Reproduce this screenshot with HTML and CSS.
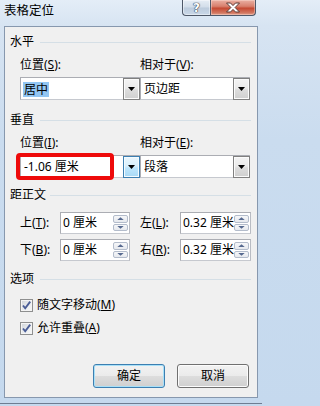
FILE: index.html
```html
<!DOCTYPE html>
<html lang="zh-CN">
<head>
<meta charset="utf-8">
<title>表格定位</title>
<link rel="stylesheet" href="styles.css">
</head>
<body>
<div class="titlebar">
  <div class="title">表格定位</div>
  <div class="caption-btns">
    <div class="cap help">?</div>
    <div class="cap close">
      <svg width="16" height="11" viewBox="0 0 16 11"><path d="M1.5 1h4l2.5 2.6L10.5 1h4l-4.4 4.5 4.4 4.5h-4L8 7.4 5.5 10h-4l4.4-4.5z" fill="#fff" stroke="#5b3a35" stroke-width="1" stroke-linejoin="round"/></svg>
    </div>
  </div>
</div>
<div class="client">
  <div class="group-head first"><span>水平</span><i class="rule"></i></div>
  <div class="pair labels"><label>位置(<u>S</u>):</label><label>相对于(<u>V</u>):</label></div>
  <div class="pair combos">
    <div class="combo"><span class="val"><span class="sel">居中</span></span><span class="drop"></span></div>
    <div class="combo"><span class="val">页边距</span><span class="drop"></span></div>
  </div>

  <div class="group-head"><span>垂直</span><i class="rule"></i></div>
  <div class="pair labels"><label>位置(<u>I</u>):</label><label>相对于(<u>E</u>):</label></div>
  <div class="pair combos">
    <div class="combo focused"><span class="val">-1.06 厘米</span><span class="drop"></span><span class="annot"></span></div>
    <div class="combo"><span class="val">段落</span><span class="drop"></span></div>
  </div>

  <div class="group-head mid"><span>距正文</span><i class="rule"></i></div>
  <div class="spin-row">
    <label>上(<u>T</u>):</label>
    <div class="spin"><span class="val">0 厘米</span><span class="btns"><span class="up"></span><span class="down"></span></span></div>
    <label>左(<u>L</u>):</label>
    <div class="spin wide"><span class="val">0.32 厘米</span><span class="btns"><span class="up"></span><span class="down"></span></span></div>
  </div>
  <div class="spin-row second">
    <label>下(<u>B</u>):</label>
    <div class="spin"><span class="val">0 厘米</span><span class="btns"><span class="up"></span><span class="down"></span></span></div>
    <label>右(<u>R</u>):</label>
    <div class="spin wide"><span class="val">0.32 厘米</span><span class="btns"><span class="up"></span><span class="down"></span></span></div>
  </div>

  <div class="group-head opts"><span>选项</span><i class="rule"></i></div>
  <div class="check-row">
    <span class="checkbox"><svg width="11" height="11" viewBox="0 0 11 11"><path d="M2 5.5l2.2 2.8L9.2 1.6" fill="none" stroke="#4a5d96" stroke-width="1.9"/></svg></span>
    <span>随文字移动(<u>M</u>)</span>
  </div>
  <div class="check-row second">
    <span class="checkbox"><svg width="11" height="11" viewBox="0 0 11 11"><path d="M2 5.5l2.2 2.8L9.2 1.6" fill="none" stroke="#4a5d96" stroke-width="1.9"/></svg></span>
    <span>允许重叠(<u>A</u>)</span>
  </div>

  <div class="footer">
    <button class="btn default">确定</button>
    <button class="btn">取消</button>
  </div>
</div>
<div class="edge"></div>
</body>
</html>
```
FILE: styles.css
```css
* { box-sizing: border-box; }
html, body { margin: 0; padding: 0; }
body {
  width: 262px;
  height: 406px;
  overflow: hidden;
  background: linear-gradient(180deg, #e4edf7 0px, #d7e4f2 26px, #cadcef 140px, #c5d9ee 406px);
  font-family: "Noto Sans", "Noto Sans CJK SC", sans-serif;
  font-size: 12px;
  line-height: 16px;
  color: #000;
}
u { text-decoration: underline; text-underline-offset: 1px; }

.titlebar {
  height: 26px;
  display: flex;
  justify-content: space-between;
  align-items: flex-start;
}
.title {
  padding: 3px 0 0 4px;
  font-size: 12.5px;
  line-height: 16px;
  color: #000;
}
.caption-btns { display: flex; margin-right: 6px; }
.cap {
  height: 16px;
  border: 1px solid #4e5868;
  border-top: none;
  display: flex;
  align-items: center;
  justify-content: center;
}
.help {
  width: 28px;
  border-right: none;
  border-radius: 0 0 0 4px;
  background: linear-gradient(180deg, #e6edf5 0%, #d2dde9 48%, #bccbdc 52%, #cad8e8 100%);
  box-shadow: inset 0 0 0 1px rgba(255,255,255,0.45);
  color: #fff;
  font-family: "DejaVu Sans", sans-serif;
  font-weight: bold;
  font-size: 12px;
  line-height: 14px;
  text-shadow: 0 0 1px #2e3a4c, 0 0 1px #2e3a4c, 0 0 1px #2e3a4c;
}
.close {
  width: 46px;
  border-radius: 0 0 4px 0;
  background: linear-gradient(180deg, #eab0a3 0%, #d8806d 42%, #c54a33 55%, #d2765f 85%, #e0a08c 100%);
  box-shadow: inset 0 0 0 1px rgba(255,230,220,0.4);
}

.client {
  margin: 0 4px;
  height: 372px;
  border: 1px solid #8798ae;
  background: #f0f0f0;
  padding: 0 6px 0 5px;
  display: flex;
  flex-direction: column;
}

.group-head {
  display: flex;
  align-items: center;
  gap: 6px;
  margin-top: 12px;
}
.group-head.first { margin-top: 7px; }
.group-head.mid { margin-top: 9px; gap: 4px; }
.group-head.opts { margin-top: 10px; }
.rule {
  flex: 1;
  height: 1px;
  background: #d5dfe6;
}

.pair {
  display: grid;
  grid-template-columns: 120px 110px;
  margin-left: 10px;
}
.pair.labels { margin-top: 7px; }
.pair.combos { margin-top: 4px; }

.combo {
  position: relative;
  height: 23px;
  border: 1px solid #abadb3;
  border-right-color: #b9bcc3;
  border-bottom-color: #c6c9cf;
  background: #fff;
  display: flex;
}
.combo .val {
  flex: 1;
  display: flex;
  align-items: center;
  padding-left: 3px;
  white-space: nowrap;
}
.combo .sel {
  background: #92c6f3;
  line-height: 15px;
  margin-left: -1px;
  padding: 0 1px;
  margin-top: 2px;
}
.combo .drop {
  width: 17px;
  border: 1px solid #808080;
  margin: 0 -1px -1px 0;
  background: linear-gradient(180deg, #f3f3f3 0%, #ebebeb 45%, #dcdcdc 55%, #cfcfcf 100%);
  box-shadow: inset 0 0 0 1px #fbfbfb;
  display: flex;
  align-items: center;
  justify-content: center;
}
.combo .drop::after {
  content: "";
  width: 7px;
  height: 4px;
  background: #000;
  clip-path: polygon(0 0, 100% 0, 50% 100%);
}
.combo.focused .drop {
  border-color: #3c7fb1;
  background: linear-gradient(180deg, #eaf6fd 0%, #d9f0fc 45%, #bee6fd 55%, #a7d9f5 100%);
  box-shadow: inset 0 0 0 1px #f3fbff;
}
.annot {
  position: absolute;
  left: -5px;
  top: -3px;
  width: 98px;
  height: 27px;
  border: 4px solid #ee0a0a;
  border-radius: 4px;
}

.spin-row {
  display: grid;
  grid-template-columns: 40px 80px 40px 71px;
  align-items: center;
  margin-left: 10px;
  margin-top: 9px;
}
.spin-row.second { margin-top: 5px; }
.spin {
  width: 70px;
  height: 22px;
  border: 1px solid #abadb3;
  border-right-color: #b9bcc3;
  border-bottom-color: #c6c9cf;
  background: #fff;
  display: flex;
}
.spin.wide { width: 71px; }
.spin .val {
  flex: 1;
  overflow: hidden;
  white-space: nowrap;
  padding-left: 2px;
  line-height: 20px;
}
.spin .btns {
  width: 16px;
  display: flex;
  flex-direction: column;
  gap: 1px;
  padding: 2px 1px 2px 0;
}
.spin .up, .spin .down {
  flex: 1;
  border: 1px solid #b3bccb;
  border-radius: 2px;
  background: linear-gradient(180deg, #f6f7f9 0%, #e6e9ee 100%);
  display: flex;
  align-items: center;
  justify-content: center;
}
.spin .up::after, .spin .down::after {
  content: "";
  width: 7px;
  height: 3px;
  background: #56698f;
}
.spin .up::after { clip-path: polygon(50% 0, 100% 100%, 0 100%); }
.spin .down::after { clip-path: polygon(0 0, 100% 0, 50% 100%); }

.check-row {
  display: flex;
  align-items: center;
  gap: 4px;
  margin-left: 10px;
  margin-top: 10px;
}
.check-row.second { margin-top: 7px; }
.checkbox {
  width: 13px;
  height: 13px;
  border: 1px solid #8e8f8f;
  background: linear-gradient(135deg, #cfd3d8 0%, #eceef0 60%, #f8f8f8 100%);
  box-shadow: inset 0 0 0 1px #f4f4f4;
  display: flex;
  align-items: center;
  justify-content: center;
}

.footer {
  margin-top: auto;
  margin-bottom: 9px;
  margin-right: 2px;
  display: flex;
  justify-content: flex-end;
  gap: 12px;
}
.btn {
  width: 72px;
  height: 24px;
  padding: 0;
  border: 1px solid #707070;
  border-radius: 3px;
  background: linear-gradient(180deg, #f2f2f2 0%, #ebebeb 49%, #dddddd 51%, #cfcfcf 100%);
  box-shadow: inset 0 0 0 1px #fcfcfc;
  font-family: "Noto Sans", "Noto Sans CJK SC", sans-serif;
  font-size: 12px;
  line-height: 16px;
  color: #000;
}
.btn.default {
  border-color: #3c7fb1;
  box-shadow: inset 0 0 0 1px #a8e0f8;
}

.edge {
  margin-top: 5px;
  height: 1px;
  background: #6e7d92;
}
```
